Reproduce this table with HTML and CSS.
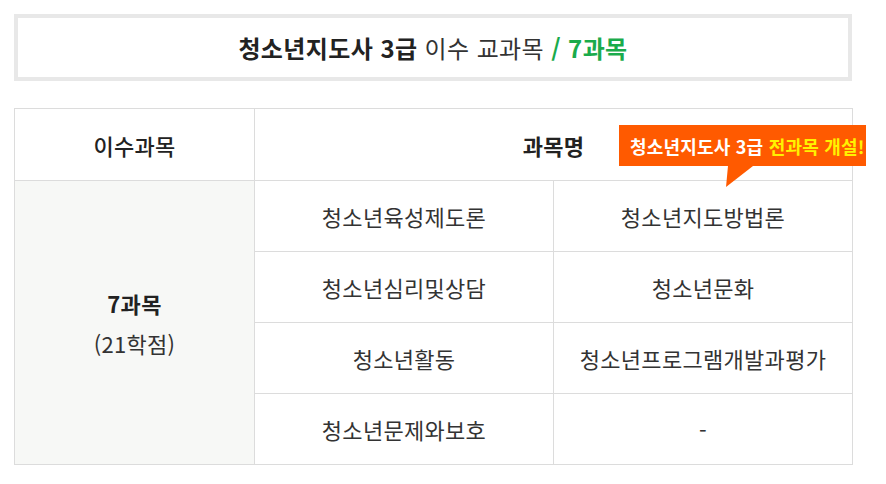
FILE: index.html
```html
<!DOCTYPE html>
<html lang="ko">
<head>
<meta charset="utf-8">
<link rel="stylesheet" href="styles.css">
</head>
<body>
<div class="title-box">
  <span class="t-bold">청소년지도사 3급</span> 이수 교과목 <span class="t-green">/ 7과목</span>
</div>
<div class="table-wrap">
  <table class="course-table">
    <colgroup>
      <col class="c1"><col class="c2"><col class="c3">
    </colgroup>
    <thead>
      <tr>
        <th class="h-left">이수과목</th>
        <th colspan="2">과목명</th>
      </tr>
    </thead>
    <tbody>
      <tr>
        <td rowspan="4" class="summary"><strong>7과목</strong><br>(21학점)</td>
        <td>청소년육성제도론</td>
        <td>청소년지도방법론</td>
      </tr>
      <tr>
        <td>청소년심리및상담</td>
        <td>청소년문화</td>
      </tr>
      <tr>
        <td>청소년활동</td>
        <td>청소년프로그램개발과평가</td>
      </tr>
      <tr>
        <td>청소년문제와보호</td>
        <td>-</td>
      </tr>
    </tbody>
  </table>
  <div class="badge">청소년지도사 3급 <span class="badge-yellow">전과목 개설!</span>
    <svg class="badge-tail" width="28" height="21" viewBox="0 0 28 21"><polygon points="2,0 27,0 0,21" fill="#ff5a00"/></svg>
  </div>
</div>
</body>
</html>
```
FILE: styles.css
```css
html, body {
  margin: 0;
  padding: 0;
  background: #fff;
}
body {
  padding: 14px;
  width: 838px;
  font-family: "Noto Sans CJK KR", "Noto Sans", sans-serif;
  color: #333;
}
.title-box {
  box-sizing: border-box;
  height: 67px;
  border: 4px solid #e8e8e8;
  display: flex;
  align-items: center;
  justify-content: center;
  font-size: 24px;
  color: #333;
  letter-spacing: 0.4px;
  white-space: pre;
}
.t-bold {
  font-weight: 700;
  color: #222;
}
.t-green {
  font-weight: 700;
  color: #1aab4b;
}
.table-wrap {
  position: relative;
  margin-top: 27px;
}
.course-table {
  width: 838px;
  border-collapse: collapse;
  table-layout: fixed;
  font-size: 22px;
  letter-spacing: 0.3px;
  color: #333;
}
.c1 { width: 240px; }
.c2 { width: 299px; }
.c3 { width: 299px; }
.course-table th,
.course-table td {
  border: 1px solid #dcdcdc;
  text-align: center;
  padding: 0;
  height: 70px;
  font-weight: 400;
}
.course-table th {
  font-weight: 700;
  height: 71px;
  color: #222;
}
.course-table th.h-left {
  font-weight: 500;
}
.course-table td.summary {
  background: #f7f8f6;
  line-height: 40px;
}
.summary strong {
  font-weight: 700;
  color: #222;
}
.badge {
  position: absolute;
  left: 605px;
  top: 17px;
  width: 259px;
  height: 41px;
  box-sizing: border-box;
  background: #ff5a00;
  color: #fff;
  font-weight: 700;
  font-size: 18px;
  letter-spacing: 0.2px;
  display: flex;
  align-items: center;
  padding-left: 11px;
  white-space: pre;
  overflow: visible;
}
.badge-yellow {
  color: #fff200;
}
.badge-tail {
  position: absolute;
  left: 107px;
  top: 41px;
}
```
